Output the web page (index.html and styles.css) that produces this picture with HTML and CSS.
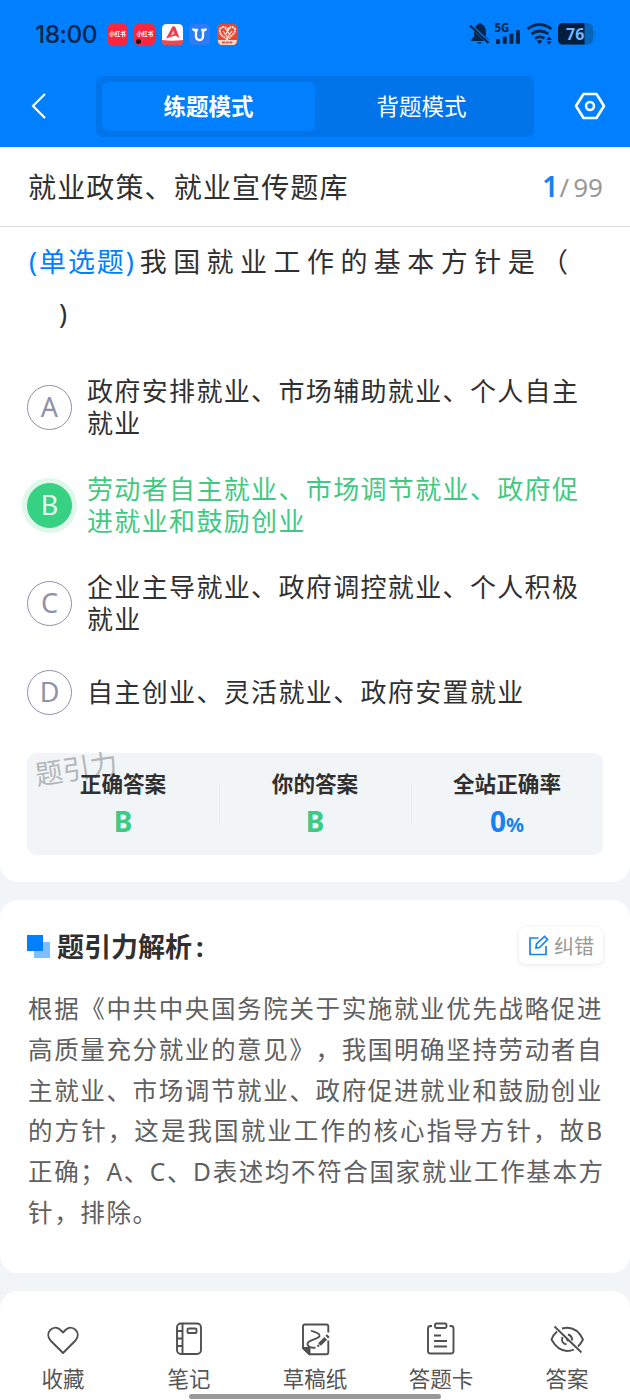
FILE: index.html
```html
<!DOCTYPE html>
<html lang="zh-CN">
<head>
<meta charset="utf-8">
<title>练题模式</title>
<link rel="stylesheet" href="styles.css">
</head>
<body>
<header class="top">
  <div class="status">
    <span class="clock">18:00</span>
    <div class="apps">
      <span class="app app-red">小红书</span>
      <span class="app app-red">小红书<i class="dot"></i></span>
      <svg class="app-svg" viewBox="0 0 21 21"><rect width="21" height="21" rx="4.5" fill="#fff"/><path d="M0 16Q10 17.500 21 16V17Q21 21 17 21H4Q0 21 0 17Z" fill="#ef4750"/><path d="M4 14.500 10.500 2.500q2-1 3 1L17.500 14l-4-2.500Z" fill="#f1394b"/><path d="M8.500 11.500 11.500 6l1 4Z" fill="#ffc3c5"/></svg>
      <svg class="app-svg" viewBox="0 0 21 21"><rect width="21" height="21" rx="4.500" fill="#2c7cf8"/><path d="M4 4.500q.5 2 3 2M17 4.500q-.5 2-3 2M9 6H7v6q0 4 3.500 4t3.500-4V6h-2" fill="none" stroke="#fff" stroke-width="2.300"/></svg>
      <svg class="app-svg" viewBox="0 0 21 21"><rect width="21" height="21" rx="4.500" fill="#e84735"/><path d="M10.500 15C4 12 2 9 3 5q3-4 7.500 0 4.500-4 7.500 0 1 4-7.500 10Z" fill="none" stroke="#ffe8dc" stroke-width="2" stroke-dasharray="2 .7"/><path d="m6 7 4.500 6L15 7M8 4l5 7M13 4l-5 7" stroke="#ffe8dc" fill="none" stroke-width="1.200"/><path d="M1 16h19q-.5 5-4 5H5q-4 0-4-5Z" fill="#f7d9cb"/><path d="M5 18.500h11" stroke="#d95848" stroke-width="2" stroke-dasharray="3 .7"/></svg>
    </div>
    <svg class="signals" viewBox="468 20 128 28" fill="#04264d">
      <path d="M471 41v-1l3-3.500V32q0-6 4-7.500 1-1.500 2-1.500t2 1.500q4 1.500 4 7.500v4.500l3 3.500v1ZM477 42.300h5q-2.500 3-5 0Z"/>
      <path d="m470 25 19 18" stroke="#0080ff" stroke-width="3.600"/><path d="m470 25.500 18.500 17.500" stroke="#04264d" stroke-width="2"/>
      <text x="494.500" y="32" class="fiveg">5G</text>
      <rect x="496" y="39" width="4" height="5" rx="1"/><rect x="502.800" y="36.500" width="4" height="7.500" rx="1"/><rect x="509.500" y="33.500" width="4" height="10.500" rx="1"/><rect x="516" y="30" width="4" height="14" rx="1"/>
      <g fill="none" stroke="#04264d" stroke-width="2.700"><path d="M527.500 29q12-9 24 0"/><path d="M531.500 34q8-6 17 0"/><path d="M535 38.300q5-3 9.500 0"/></g>
      <path d="m536.500 41 3 3 3-3q-3-1.800-6 0ZM546 40l3-3.500 3 3.500ZM546 41.200l3 3.300 3-3.300Z"/>
      <rect x="558" y="23" width="35" height="21.500" rx="5" fill="#0865bd"/><path d="M593.500 29.500q2 4.500 0 8.500Z" fill="#0865bd"/>
      <path d="M563 23h21.500v21.500H563q-5 0-5-5V28q0-5 5-5Z" fill="#041d3c"/>
      <text x="566" y="40" class="battery">76</text>
    </svg>
  </div>
  <nav class="nav">
    <svg class="back" viewBox="0 0 16 28"><path d="M14 2 2 14l12 12" fill="none" stroke="#fff" stroke-width="2.200"/></svg>
    <div class="tabs"><span class="tab active">练题模式</span><span class="tab">背题模式</span></div>
    <svg class="gear" viewBox="0 0 32 28"><path d="M9.500 2h13L30 14l-7.500 12h-13L2 14Z" fill="none" stroke="#fff" stroke-width="2.600" stroke-linejoin="round"/><circle cx="16" cy="14" r="4" fill="none" stroke="#fff" stroke-width="2.500"/></svg>
  </nav>
</header>

<main class="question-card">
  <div class="bank"><h1 class="bank-name">就业政策、就业宣传题库</h1><div class="progress"><b class="current">1</b><span class="slash">/</span><span>99</span></div></div>
  <p class="question"><span class="kind">(单选题)</span><span class="stem">我国就业工作的基本方针是（</span><br><span class="close">)</span></p>
  <ul class="options">
    <li class="option"><span class="badge">A</span><span class="label">政府安排就业、市场辅助就业、个人自主<br>就业</span></li>
    <li class="option chosen"><span class="badge">B</span><span class="label">劳动者自主就业、市场调节就业、政府促<br>进就业和鼓励创业</span></li>
    <li class="option"><span class="badge">C</span><span class="label">企业主导就业、政府调控就业、个人积极<br>就业</span></li>
    <li class="option single"><span class="badge">D</span><span class="label">自主创业、灵活就业、政府安置就业</span></li>
  </ul>
  <section class="result">
    <span class="watermark">题引力</span>
    <div class="stat"><span class="stat-name">正确答案</span><b class="stat-value">B</b></div>
    <div class="stat"><span class="stat-name">你的答案</span><b class="stat-value">B</b></div>
    <div class="stat"><span class="stat-name">全站正确率</span><b class="stat-value rate">0<small class="pct">%</small></b></div>
  </section>
</main>

<section class="analysis">
  <div class="analysis-head">
    <svg class="squares" viewBox="0 0 23 23"><rect x="7" y="7" width="16" height="16" fill="#80bfff"/><rect width="16" height="16" fill="#0080ff"/></svg>
    <h2 class="analysis-title">题引力解析<span class="colon">:</span></h2>
    <button class="report"><svg class="edit" viewBox="0 0 21 21"><path d="M10.500 3H2v16.500h16V11M8 13l.5-4L16.500 1.500l3 3L11.500 12.500Z" fill="none" stroke="#1683f2" stroke-width="1.700"/></svg>纠错</button>
  </div>
  <p class="analysis-text">根据《中共中央国务院关于实施就业优先战略促进<br>高质量充分就业的意见》，我国明确坚持劳动者自<br>主就业、市场调节就业、政府促进就业和鼓励创业<br><span class="stretch">的方针，这是我国就业工作的核心指导方针，故B</span><br>正确；A、C、D表述均不符合国家就业工作基本方<br>针，排除。</p>
</section>

<footer class="toolbar">
  <div class="tool"><svg class="icon" viewBox="0 0 36 36"><path d="M18 32 5.500 19.500C-1 12 8 3 15 8.500l3 3 3-3C28 3 37 12 30.500 19.500Z"/></svg>收藏</div>
  <div class="tool"><svg class="icon" viewBox="0 0 36 36"><rect x="6" y="2.500" width="24" height="30.500" rx="4"/><path d="M11.500 2.500V33M6 10h5.500M6 17.500h5.500M6 25h5.500"/><rect x="16.500" y="7.500" width="9" height="4.500" rx="1"/></svg>笔记</div>
  <div class="tool"><svg class="icon" viewBox="0 0 36 36"><path d="M31.300 11.500V5.500q0-2-2-2H8q-2 0-2 2V27l6.500 6.200h16.800q2 0 2-2V19.500"/><path d="M6 27h6.500v6.200Z" fill="#505050"/><path d="M14 9.500c4 2 9 2.500 8.500 5.500-.7 3.500-12 3.500-12 8 0 3 4 4 8 3.700"/><path d="m22.500 23.500 6.200-6.200" stroke-width="3.800"/><path d="m29.800 16.200 1.500-1.500" stroke-width="3.800"/><path d="m20.500 25.500 1.500-1.500"/></svg>草稿纸</div>
  <div class="tool"><svg class="icon" viewBox="0 0 36 36"><path d="M9 5H7.500q-2.500 0-2.500 2.500V30q0 2.500 2.500 2.500h20.500q2.500 0 2.500-2.500V7.500Q30.500 5 28 5h-1.500M11 14.500h7M11 20h13M11 25.500h13"/><rect x="12" y="2.500" width="11.500" height="4.500" rx="1.500"/></svg>答题卡</div>
  <div class="tool"><svg class="icon" viewBox="0 0 36 36"><path d="M8 10.500Q4 14 2.500 18.500q6 11 15.500 11.500 4 0 7-1.500M13 7.500q14-3.500 21 11-2 4-5 7M13.500 16q-2 6 4 7.500M19 13.500q4.500 1.500 4 6M17.500 18l2 2M5.500 5.500l27 26"/></svg>答案</div>
  <span class="home-bar"></span>
</footer>
</body>
</html>
```
FILE: styles.css
```css
* { box-sizing: border-box; }
body {
  margin: 0;
  width: 630px;
  height: 1400px;
  overflow: hidden;
  background: #f1f5f8;
  color: #303030;
  font-family: "Noto Sans", "Noto Sans CJK SC", sans-serif;
  text-spacing-trim: space-all;
  display: flex;
  flex-direction: column;
}
h1, h2, p, ul { margin: 0; padding: 0; }
svg { display: block; flex: none; }

.top { height: 147px; background: #0080ff; flex: none; }
.status { height: 76px; padding: 0 34px 8px 35px; display: flex; align-items: center; }
.clock { width: 72px; font: 500 24.500px/30px Inter, sans-serif; letter-spacing: -.5px; color: #04264d; }
.apps { display: flex; gap: 6.400px; flex: 1; }
.app { position: relative; width: 21px; height: 21px; border-radius: 4.500px; background: #fb263d; color: #fff; font: 700 5.500px/21px "Noto Sans CJK SC", sans-serif; text-align: center; white-space: nowrap; }
.dot { position: absolute; left: 2px; bottom: 1px; width: 5px; height: 5px; border-radius: 50%; background: #23060b; }
.app-svg { width: 21px; height: 21px; }
.signals { width: 128px; height: 28px; }
.fiveg { font: 700 11.500px "Noto Sans", sans-serif; }
.battery { font: 700 16px "Noto Sans", sans-serif; fill: #6fb6ff; }

.nav { display: flex; align-items: center; padding: 0 24px 0 31px; }
.back { width: 16px; height: 28px; margin-bottom: 1px; }
.tabs { display: flex; width: 438px; height: 61px; margin-left: 49px; padding: 6px; border-radius: 7px; background: #0074e8; }
.tab { flex: 1; display: flex; align-items: center; justify-content: center; padding-bottom: 2px; font-size: 22.500px; color: #fff; border-radius: 6px; }
.active { background: #0080ff; font-weight: 700; }
.gear { width: 32px; height: 28px; margin: 0 0 1px auto; }

.question-card { flex: none; height: 735px; background: #fff; border-radius: 0 0 18px 18px; }
.bank { height: 80px; padding: 0 27px 0 28px; display: flex; align-items: center; justify-content: space-between; border-bottom: 1px solid #dcdcdc; }
.bank-name { font-size: 28px; font-weight: 400; line-height: 40px; letter-spacing: 1.150px; }
.progress { display: flex; align-items: baseline; font-size: 26px; line-height: 36px; color: #999; }
.current { font-size: 29px; font-weight: 600; color: #1481f5; }
.slash { padding: 0 4px 0 1px; }
.question { height: 130px; padding: 9px 0 0 29px; font-size: 27px; line-height: 52px; white-space: nowrap; }
.kind { color: #0080ff; letter-spacing: 1.900px; }
.stem { letter-spacing: 6.450px; margin-left: 4px; }
.close { margin-left: 30px; }

.options { list-style: none; padding: 18px 0 0 27px; }
.option { height: 64px; margin-bottom: 34.200px; display: flex; align-items: center; gap: 15px; }
.option.single { height: 45px; margin-bottom: 38.400px; }
.badge { width: 45px; height: 45px; flex: none; border: 1.500px solid #8f92a8; border-radius: 50%; display: flex; align-items: center; justify-content: center; font-size: 27px; line-height: 40px; color: #8f92a8; }
.label { font-size: 26px; line-height: 32px; letter-spacing: 1.350px; white-space: nowrap; }
.single .label { padding-bottom: 1px; }
.chosen .badge { background: #36d183; border-color: #36d183; color: #e5fff1; box-shadow: 0 0 0 5px #dff8eb; }
.chosen .label { color: #3fca82; }

.result { position: relative; height: 102px; margin: 0 27px; padding-top: 15px; border-radius: 9px; background: #f1f5f8; display: flex; }
.watermark { position: absolute; left: 8px; top: -2px; font-size: 27.500px; line-height: 36px; color: #b4b7b9; transform: rotate(-9deg); }
.stat { position: relative; flex: 1; display: flex; flex-direction: column; align-items: center; }
.stat + .stat::before { content: ""; position: absolute; left: 0; top: 16px; width: 1px; height: 40px; background: #e9edf1; }
.stat-name { font-size: 21.600px; font-weight: 700; line-height: 32px; }
.stat-value { font-size: 28px; line-height: 42px; color: #3fca82; }
.rate { color: #1481f5; }
.pct { font-size: 20px; }

.analysis { flex: none; height: 373px; margin-top: 18px; padding: 26px 27px 0; background: #fff; border-radius: 18px; }
.analysis-head { display: flex; align-items: center; height: 40px; }
.squares { width: 23px; height: 23px; }
.analysis-title { font-size: 27px; line-height: 40px; margin: 2px 0 0 7px; }
.colon { margin-left: 4px; }
.report { margin: 0 0 1px auto; width: 84px; height: 37px; padding: 0; border: 0; border-radius: 7px; background: #fff; box-shadow: 0 1px 5px #0000001a; display: flex; align-items: center; justify-content: center; gap: 5px; color: #999; font: 20px "Noto Sans CJK SC", sans-serif; white-space: nowrap; }
.edit { width: 21px; height: 21px; }
.analysis-text { margin-top: 23px; padding-left: 1px; font-size: 24.500px; line-height: 40.800px; letter-spacing: 1.640px; color: #606060; white-space: nowrap; }
.stretch { letter-spacing: 2.080px; }

.toolbar { position: relative; flex: none; height: 109px; margin-top: 18px; padding-top: 30px; background: #fff; border-radius: 18px 18px 0 0; display: flex; }
.tool { flex: 1; display: flex; flex-direction: column; align-items: center; gap: 8px; font-size: 21.500px; line-height: 28px; color: #555; }
.icon { width: 36px; height: 36px; fill: none; stroke: #505050; stroke-width: 1.900; stroke-linejoin: round; }
.home-bar { position: absolute; left: 189px; bottom: 1px; width: 252px; height: 5px; border-radius: 3px; background: #999; }
```
